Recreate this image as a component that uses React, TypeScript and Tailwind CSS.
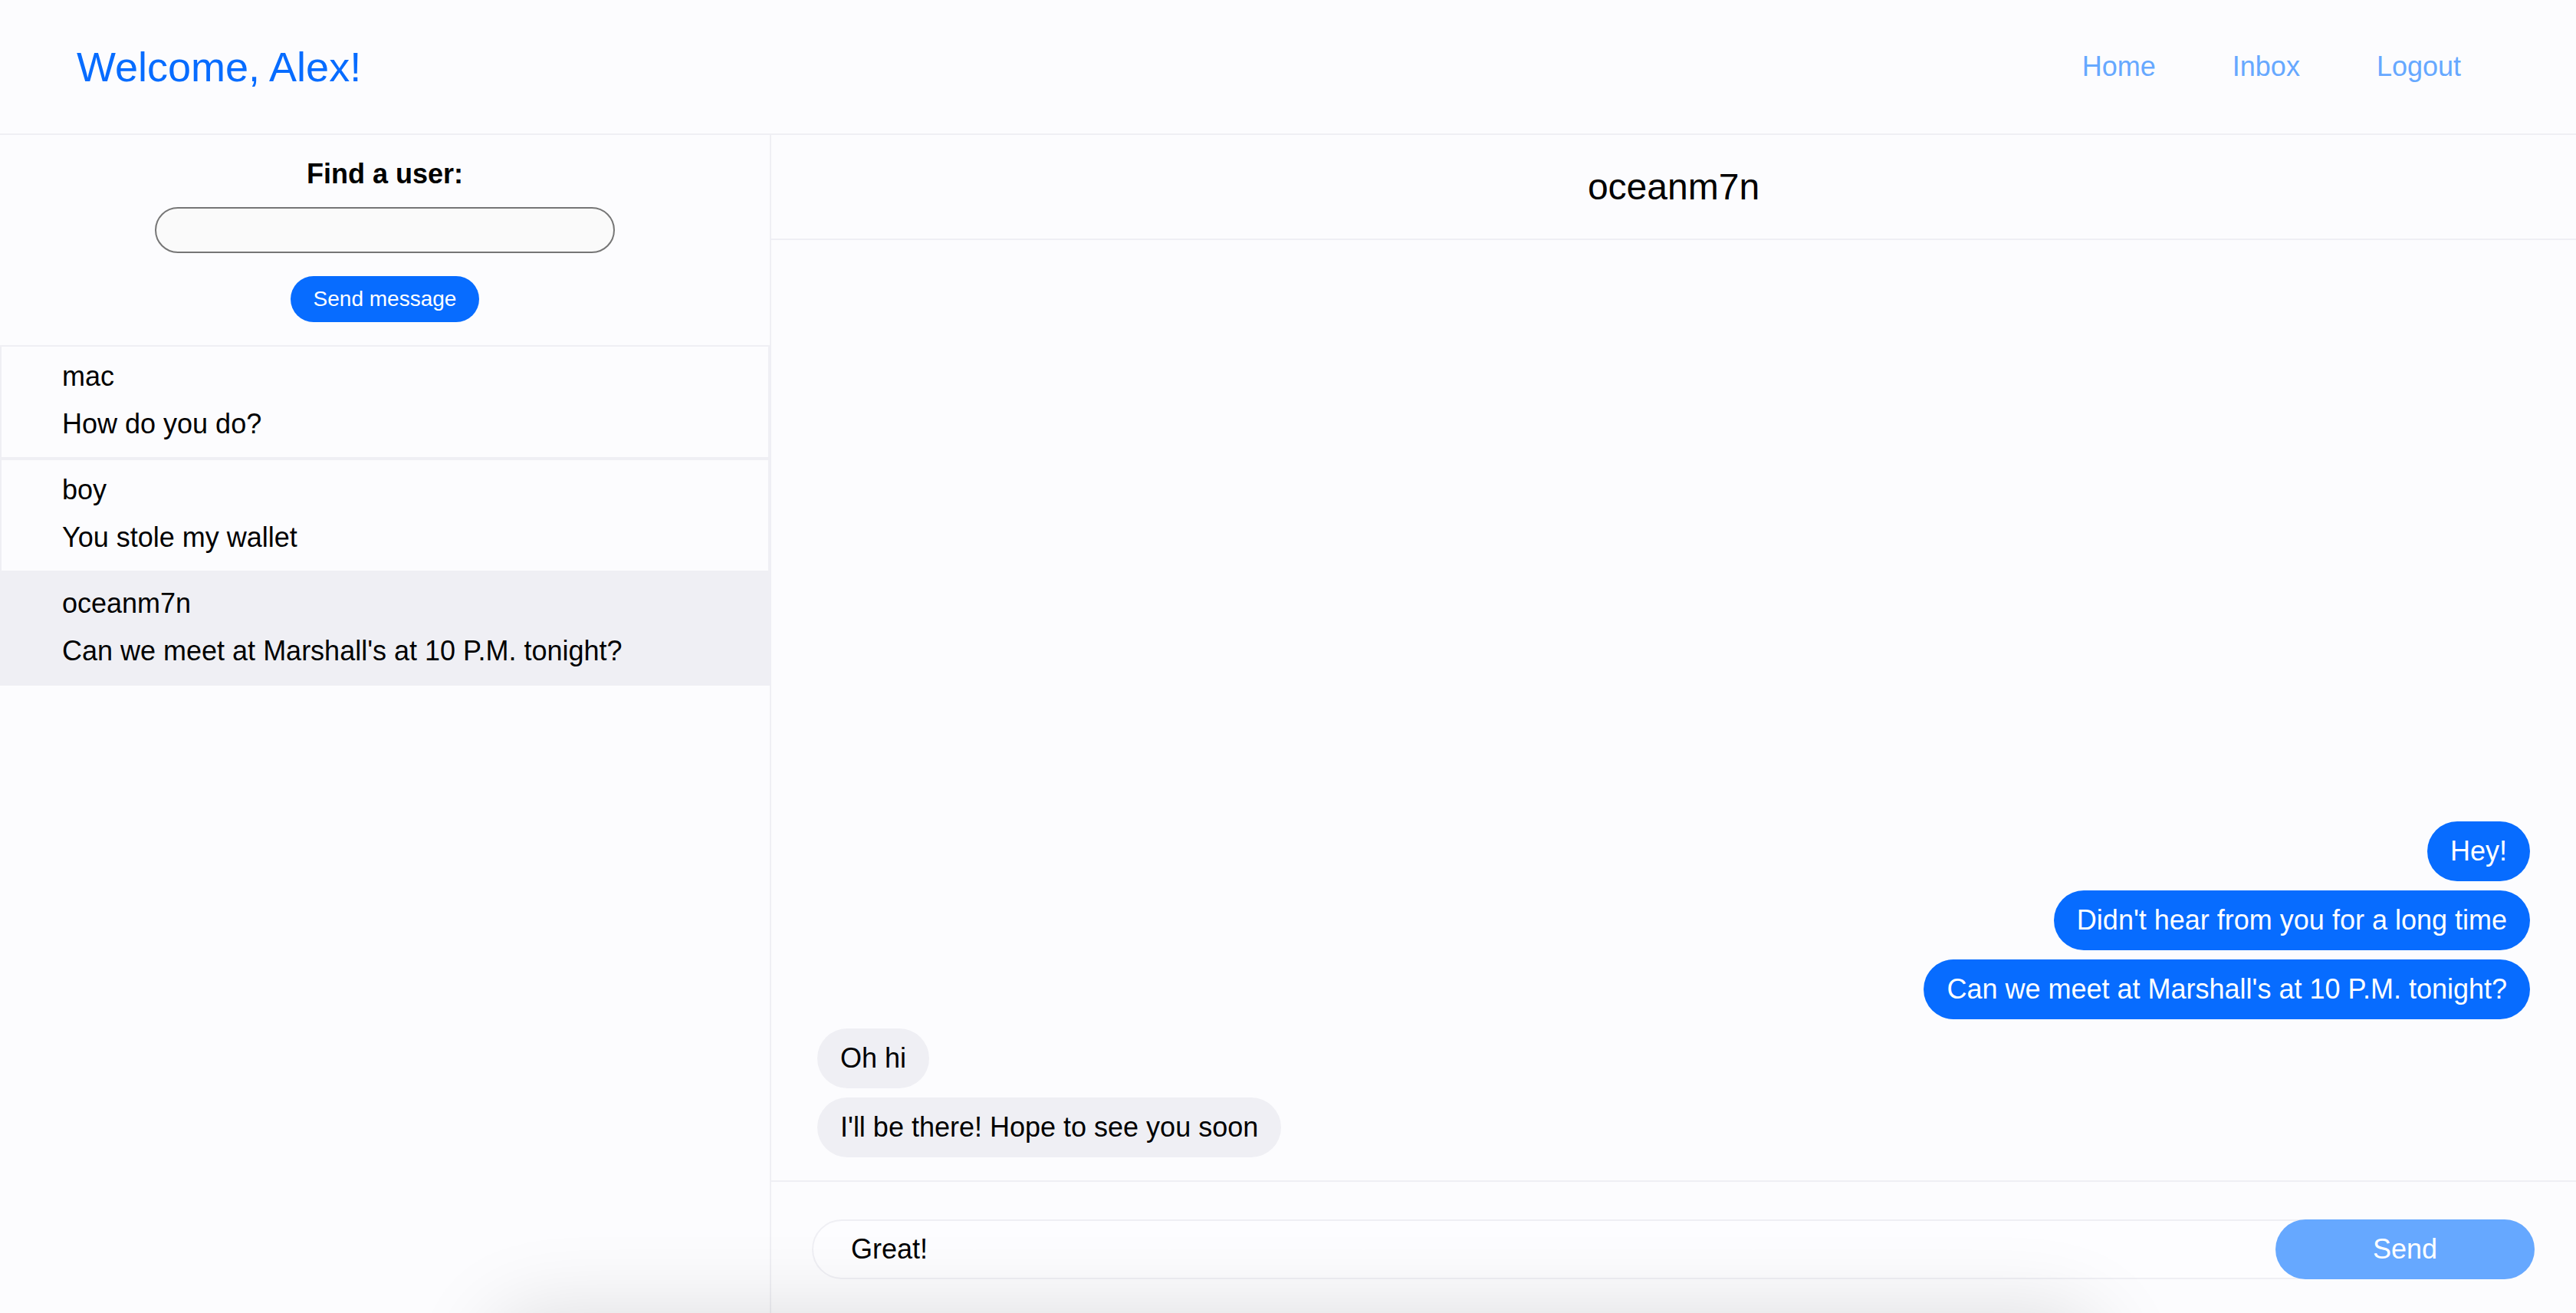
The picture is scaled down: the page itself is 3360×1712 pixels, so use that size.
const conversations = [
  { name: 'mac', last: 'How do you do?', active: false },
  { name: 'boy', last: 'You stole my wallet', active: false },
  { name: 'oceanm7n', last: "Can we meet at Marshall's at 10 P.M. tonight?", active: true },
];

const messages = [
  { text: 'Hey!', mine: true },
  { text: "Didn't hear from you for a long time", mine: true },
  { text: "Can we meet at Marshall's at 10 P.M. tonight?", mine: true },
  { text: 'Oh hi', mine: false },
  { text: "I'll be there! Hope to see you soon", mine: false },
];

export default function App() {
  return (
    <div className="relative h-[1712px] w-full overflow-hidden bg-[#fcfcfe] font-['Liberation_Sans',Arial,sans-serif] text-black flex flex-col">
      <header className="h-[176px] shrink-0 border-b-2 border-[#efeff4] flex items-center justify-between pl-[100px] pr-[150px]">
        <h1 className="text-[54px] leading-none text-[#076cff]">Welcome, Alex!</h1>
        <nav className="flex gap-[100px] text-[36px] text-[#66a8ff]">
          <a href="#">Home</a>
          <a href="#">Inbox</a>
          <a href="#">Logout</a>
        </nav>
      </header>

      <div className="flex flex-1 min-h-0">
        <aside className="w-[1006px] shrink-0 border-r-2 border-[#efeff4] flex flex-col">
          <div className="flex flex-col items-center pt-[30px] pb-[30px]">
            <label className="text-[36px] leading-[41px] font-bold">Find a user:</label>
            <input className="mt-[23px] h-[60px] w-[600px] rounded-full border-2 border-[#767676] bg-[#fafafa] px-6 text-[32px] outline-none" />
            <button className="mt-[30px] h-[60px] rounded-full bg-[#076cff] px-[30px] text-[28px] text-white">
              Send message
            </button>
          </div>
          {conversations.map((c) => (
            <div
              key={c.name}
              className={`border-2 border-[#efeff4] pl-[79px] pt-[18px] pb-[23px] flex flex-col gap-[21px] text-[36px] leading-[41px] ${c.active ? 'bg-[#efeff4]' : ''}`}
            >
              <span>{c.name}</span>
              <span>{c.last}</span>
            </div>
          ))}
        </aside>

        <main className="flex-1 flex flex-col min-w-0">
          <div className="h-[137px] shrink-0 border-b-2 border-[#efeff4] flex items-center justify-center text-[48px]">
            oceanm7n
          </div>
          <div className="flex-1 flex flex-col justify-end gap-3 px-[60px] pb-[30px]">
            {messages.map((m) => (
              <div
                key={m.text}
                className={`h-[78px] flex items-center rounded-full px-[30px] text-[36px] ${m.mine ? 'self-end bg-[#076cff] text-white' : 'self-start bg-[#efeff4]'}`}
              >
                {m.text}
              </div>
            ))}
          </div>
          <div className="h-[173px] shrink-0 border-t-2 border-[#efeff4] pl-[53px] pr-[54px] pt-[49px]">
            <div className="flex h-[78px] items-center rounded-full border-2 border-[#efeff4] bg-[#fdfdff]">
              <span className="flex-1 pl-[49px] text-[36px]">Great!</span>
              <button className="-mr-[2px] h-[78px] w-[338px] rounded-full bg-[#66a8ff] text-[36px] text-white">
                Send
              </button>
            </div>
          </div>
        </main>
      </div>

      <div className="absolute left-[640px] top-[1712px] h-[200px] w-[2100px] rounded-t-[60px] bg-white shadow-[0_0_110px_rgba(0,0,0,0.13)]" />
    </div>
  );
}
